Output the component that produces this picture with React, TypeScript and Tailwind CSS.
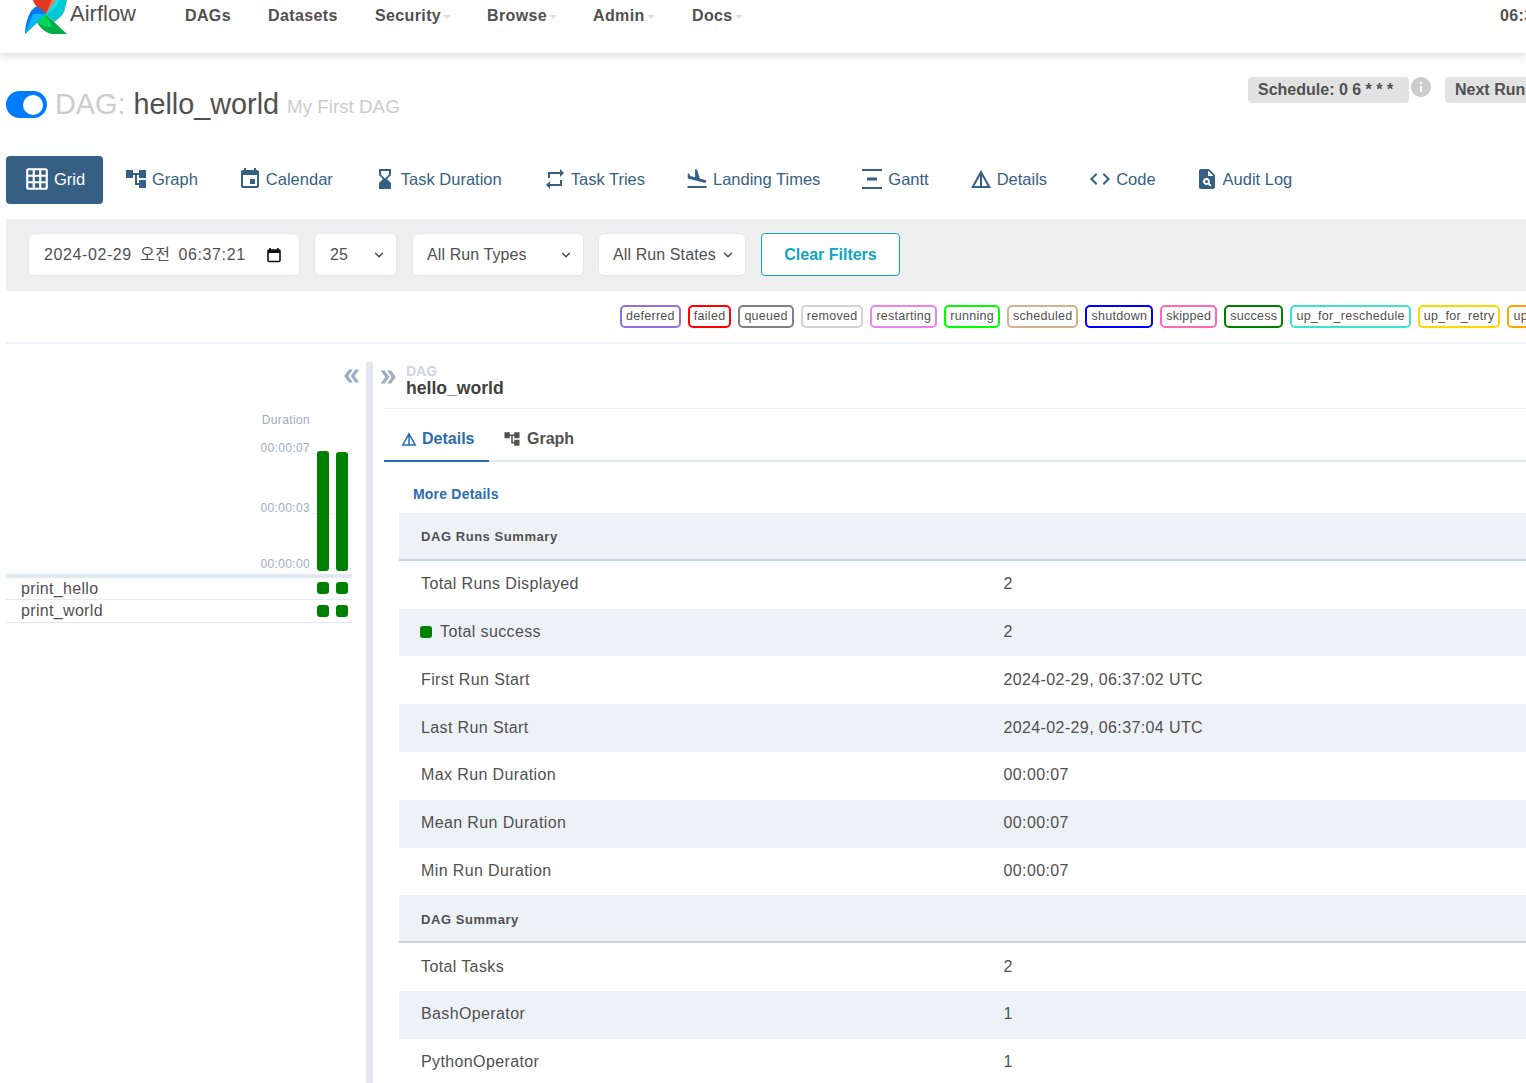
import {
  MdAccountTree,
  MdCode,
  MdDetails,
  MdDoubleArrow,
  MdEvent,
  MdFlightLand,
  MdGridOn,
  MdHourglassBottom,
  MdInfo,
  MdPlagiarism,
  MdRepeat,
  MdVerticalDistribute,
} from "react-icons/md"
import { ChevronDown } from "lucide-react"
import type { ReactNode } from "react"

const navItems = [
  { label: "DAGs", w: "w-[83px]" },
  { label: "Datasets", w: "w-[107px]" },
  { label: "Security", w: "w-[112px]", caret: true },
  { label: "Browse", w: "w-[106px]", caret: true },
  { label: "Admin", w: "w-[99px]", caret: true },
  { label: "Docs", w: "w-[100px]", caret: true },
]

const viewTabs = [
  { label: "Graph", icon: <MdAccountTree />, ml: "ml-[21px]" },
  { label: "Calendar", icon: <MdEvent />, ml: "ml-[40px]" },
  { label: "Task Duration", icon: <MdHourglassBottom />, ml: "ml-[40px]" },
  { label: "Task Tries", icon: <MdRepeat />, ml: "ml-[41px]" },
  { label: "Landing Times", icon: <MdFlightLand />, ml: "ml-[40px]" },
  { label: "Gantt", icon: <MdVerticalDistribute />, ml: "ml-[40px]" },
  { label: "Details", icon: <MdDetails />, ml: "ml-[40px]" },
  { label: "Code", icon: <MdCode />, ml: "ml-[41px]" },
  { label: "Audit Log", icon: <MdPlagiarism />, ml: "ml-[39px]" },
]

const states = [
  { label: "deferred", border: "border-[#9370db]" },
  { label: "failed", border: "border-[#ff0000]" },
  { label: "queued", border: "border-[#808080]" },
  { label: "removed", border: "border-[#d3d3d3]" },
  { label: "restarting", border: "border-[#ee82ee]" },
  { label: "running", border: "border-[#00ff00]" },
  { label: "scheduled", border: "border-[#d2b48c]" },
  { label: "shutdown", border: "border-[#0000ff]" },
  { label: "skipped", border: "border-[#ff69b4]" },
  { label: "success", border: "border-[#008000]" },
  { label: "up_for_reschedule", border: "border-[#40e0d0]" },
  { label: "up_for_retry", border: "border-[#ffd700]" },
  { label: "upstream_failed", border: "border-[#ffa500]" },
]

type Row = { label: ReactNode; value?: string; heading?: boolean }

const rows: Row[] = [
  { label: "DAG Runs Summary", heading: true },
  { label: "Total Runs Displayed", value: "2" },
  {
    label: (
      <span className="flex items-center gap-2 -ml-px">
        <span className="w-3 h-3 rounded-[3px] bg-[#008000]" />
        Total success
      </span>
    ),
    value: "2",
  },
  { label: "First Run Start", value: "2024-02-29, 06:37:02 UTC" },
  { label: "Last Run Start", value: "2024-02-29, 06:37:04 UTC" },
  { label: "Max Run Duration", value: "00:00:07" },
  { label: "Mean Run Duration", value: "00:00:07" },
  { label: "Min Run Duration", value: "00:00:07" },
  { label: "DAG Summary", heading: true },
  { label: "Total Tasks", value: "2" },
  { label: "BashOperator", value: "1" },
  { label: "PythonOperator", value: "1" },
]

function Logo() {
  return (
    <svg width="44" height="35" viewBox="0 0 44 35" className="shrink-0">
      <path d="M22 14C14 9 9 3 9 0L28 0C27 5 24 10 22 14Z" fill="#e43921" />
      <path d="M22 14L28 0L32 0C31 4 27 10 22 14Z" fill="#ff7557" />
      <path d="M22 14L32 0L43 0L41 9C40 14 36 18 30 22Z" fill="#00c7d4" />
      <path d="M22 14L32 0L35 0C34 5 29 11 22 14Z" fill="#11e1ee" />
      <path d="M22 14C17 8 13 6 11 7L7 11C3 18 1 26 1 34L16 20Z" fill="#017cee" />
      <path d="M22 14L1 34L9 14Z" fill="#0cb6ff" />
      <path d="M22 14L13 22C16 28 22 33 28 34L43 34L28 20Z" fill="#00ad46" />
      <path d="M22 14L13 22C16 25 22 27 28 27Z" fill="#04d659" />
    </svg>
  )
}

function SelectBox({ label, className }: { label: string; className: string }) {
  return (
    <div
      className={`h-[43px] flex items-center justify-between bg-white border border-[#e2e8f0] rounded-md text-[16px] tracking-[0.1px] text-[#51504f] ${className}`}
    >
      <span>{label}</span>
      <ChevronDown className="w-[14px] h-[14px] text-[#3d3d3d]" strokeWidth={2.2} />
    </div>
  )
}

function RunPair({ tall, top }: { tall?: boolean; top?: string }) {
  return (
    <div className={`absolute right-[4px] flex items-end gap-[7px] ${tall ? "bottom-0" : top}`}>
      <span className={`w-3 rounded-[3px] bg-[#008000] ${tall ? "h-[120px]" : "h-3"}`} />
      <span className={`w-3 rounded-[3px] bg-[#008000] ${tall ? "h-[119px]" : "h-3"}`} />
    </div>
  )
}

export default function App() {
  return (
    <div
      className="w-[1526px] h-[1083px] overflow-hidden bg-white text-[#51504f] text-[16px] leading-normal"
      style={{ fontFamily: '"Liberation Sans", "Noto Sans CJK KR", sans-serif' }}
    >
      {/* Top nav, page is scrolled slightly */}
      <header className="h-[53px] flex items-start bg-white shadow-[0_1px_10px_rgba(0,0,0,0.2)] relative z-10 whitespace-nowrap">
        <div className="ml-[24px] w-[161px] shrink-0 flex items-start gap-[2px]">
          <Logo />
          <span className="text-[22px] leading-[28px] text-[#51504f]">Airflow</span>
        </div>
        <nav className="flex shrink-0 pt-[4px] text-[16px] font-bold leading-[24px] tracking-[0.37px]">
          {navItems.map((item) => (
            <span key={item.label} className={`${item.w} flex items-center`}>
              {item.label}
              {item.caret && (
                <span className="ml-[2px] mt-[2px] border-x-[4px] border-x-transparent border-t-[4px] border-t-[#e4dbe8]" />
              )}
            </span>
          ))}
        </nav>
        <span className="ml-[708px] shrink-0 pt-[4px] font-bold leading-[24px] tracking-[0.37px]">06:37 UTC</span>
      </header>

      {/* DAG title */}
      <div className="relative h-[103px] whitespace-nowrap">
        <div className="absolute left-[6px] top-[38px] w-[41px] h-[27px] rounded-full bg-[#007bff]">
          <span className="absolute right-[4px] top-[4px] w-[20px] h-[20px] rounded-full bg-white" />
        </div>
        <div className="absolute left-[55px] top-[31px] text-[28.8px] leading-[40px]">
          <span className="text-[#cccccc]">DAG: </span>
          <span>hello_world</span>
          <span className="ml-[8px] text-[18.8px] text-[#cccccc] relative -top-px">My First DAG</span>
        </div>
        <div className="absolute left-[1248px] top-[24px] h-[26px] w-[161px] px-[10px] rounded-[4px] bg-[#e2e2e2] font-bold leading-[25px]">
          Schedule: 0 6 * * *
        </div>
        <MdInfo className="absolute left-[1409px] top-[22px] text-[24px] text-[#cccccc]" />
        <div className="absolute left-[1445px] top-[24px] h-[26px] w-[140px] px-[10px] rounded-[4px] bg-[#e2e2e2] font-bold leading-[25px]">
          Next Run: 2024
        </div>
      </div>

      {/* View tabs */}
      <div className="ml-[6px] h-[48px] flex items-center whitespace-nowrap text-[#365f84] text-[16.5px] leading-[22px]">
        <div className="w-[97px] h-[48px] flex items-center pb-[2px] pl-[18px] gap-[4px] bg-[#365f84] rounded-[4px] text-white">
          <MdGridOn className="text-[26px] shrink-0" />
          Grid
        </div>
        {viewTabs.map((tab) => (
          <div key={tab.label} className={`${tab.ml} flex items-center gap-[4px] pb-[2px]`}>
            <span className="text-[24px] shrink-0">{tab.icon}</span>
            {tab.label}
          </div>
        ))}
      </div>

      {/* Filters */}
      <div className="mt-[15px] ml-[6px] h-[72px] flex items-start pt-[14px] pl-[22px] gap-[14px] bg-[#eeeeee] whitespace-nowrap">
        <div className="w-[272px] h-[43px] flex items-center justify-between pl-[15px] pr-[17px] bg-white border border-[#e2e8f0] rounded-md tracking-[0.6px] [word-spacing:3px]">
          <span>2024-02-29 오전 06:37:21</span>
          <svg width="16" height="16" viewBox="0 0 16 16" className="shrink-0">
            <path d="M4 1v2M12 1v2" stroke="#111" strokeWidth="1.6" />
            <rect x="2" y="3" width="12" height="11.5" rx="1" fill="none" stroke="#111" strokeWidth="1.6" />
            <rect x="2" y="3" width="12" height="3" fill="#111" />
          </svg>
        </div>
        <SelectBox label="25" className="w-[83px] pl-[15px] pr-[10px]" />
        <SelectBox label="All Run Types" className="ml-px w-[172px] pl-[14px] pr-[10px]" />
        <SelectBox label="All Run States" className="w-[148px] pl-[14px] pr-[10px]" />
        <div className="ml-px w-[139px] h-[43px] flex items-center justify-center bg-white border border-[#0ba5c5] rounded-[4px] font-bold text-[#0ba5c5]">
          Clear Filters
        </div>
      </div>

      {/* State legend */}
      <div className="mt-[14px] ml-[620px] flex gap-[7px] whitespace-nowrap">
        {states.map((state) => (
          <span
            key={state.label}
            className={`h-[23px] px-[4px] border-2 rounded-[5px] bg-white text-[12.5px] tracking-[0.28px] leading-[19px] ${state.border}`}
          >
            {state.label}
          </span>
        ))}
      </div>
      <div className="mt-[14px] ml-[6px] h-[2px] bg-[#edf2f7]" />

      {/* Grid + details */}
      <div className="mt-[18px] ml-[6px] flex">
        <div className="relative w-[346px] shrink-0 pt-[4px]">
          <div className="flex justify-end text-[#a0aec0] text-[22px] -mr-[11px] -mt-px">
            <MdDoubleArrow className="rotate-180" />
          </div>
          <div className="relative mt-[25px] h-[159px] text-[12px] tracking-[0.35px] text-[#a0aec0]">
            <span className="absolute right-[42px] -top-px leading-[18px]">Duration</span>
            <span className="absolute right-[42px] top-[27px] leading-[18px]">00:00:07</span>
            <span className="absolute right-[42px] top-[87px] leading-[18px]">00:00:03</span>
            <span className="absolute right-[42px] top-[143px] leading-[18px]">00:00:00</span>
            <div className="absolute left-[304px] right-0 top-[41px] h-px bg-[#edf2f7]" />
            <div className="absolute left-[304px] right-0 top-[101px] h-px bg-[#edf2f7]" />
            <div className="absolute left-[304px] right-0 top-[156px] h-px bg-[#edf2f7]" />
            <RunPair tall />
          </div>
          <div className="mt-[3px] h-[4px] bg-[#e2e8f0]" />
          <div className="relative h-[22px] pl-[15px] border-b border-[#e2e8f0] leading-[21px] text-[16px] tracking-[0.33px]">
            print_hello
            <RunPair top="top-[4px]" />
          </div>
          <div className="relative h-[23px] pl-[15px] border-b border-[#e2e8f0] leading-[22px] text-[16px] tracking-[0.33px]">
            print_world
            <RunPair top="top-[5px]" />
          </div>
        </div>

        <div className="ml-[14px] w-[7px] shrink-0 h-[721px] bg-[#e2e8f0]" />

        <div className="ml-[11px] flex-1 min-w-0 whitespace-nowrap">
          <div className="h-[47px] flex border-b border-[#edf2f7]">
            <MdDoubleArrow className="ml-[-7px] mt-[4px] text-[22px] text-[#a0aec0] shrink-0" />
            <div className="ml-[7px] mt-px">
              <div className="text-[14px] leading-[16px] font-bold text-[#cbd5e0]">DAG</div>
              <div className="text-[17.6px] leading-[18px] font-bold text-[#3f3f3f]">hello_world</div>
            </div>
          </div>
          <div className="h-[53px] flex border-b-2 border-[#e2e8f0]">
            <div className="w-[105px] h-[53px] flex items-center pt-[8px] pl-[16px] gap-[4px] border-b-2 border-[#2b6cb0] font-bold text-[#2b6cb0]">
              <MdDetails className="text-[18px]" />
              Details
            </div>
            <div className="ml-[14px] h-[51px] flex items-center pt-[8px] gap-[6px] font-bold text-[#51504f]">
              <MdAccountTree className="text-[18px]" />
              Graph
            </div>
          </div>
          <div className="ml-[29px] mt-[24px] text-[14px] leading-[16px] font-bold text-[#2b6cb0] tracking-[0.2px]">
            More Details
          </div>
          <div className="ml-[15px] mt-[11px]">
            {rows.map((row, i) => (
              <div
                key={i}
                className={`h-[47.8px] flex items-center pl-[22px] ${
                  row.heading
                    ? "bg-[#edf2f7] border-b-2 border-[#cbd5e0] pt-[2px] text-[13px] font-bold tracking-[0.55px]"
                    : i % 2 === 0 || i === 10
                      ? "bg-[#edf2f7] pb-px tracking-[0.38px]"
                      : "bg-white pb-px tracking-[0.38px]"
                }`}
              >
                <div className="w-[582.5px] shrink-0">{row.label}</div>
                {row.value && <div>{row.value}</div>}
              </div>
            ))}
          </div>
        </div>
      </div>
    </div>
  )
}
